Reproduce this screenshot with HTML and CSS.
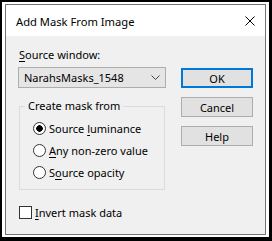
FILE: index.html
```html
<!DOCTYPE html>
<html lang="en">
<head>
  <meta charset="UTF-8" />
  <title>Add Mask From Image</title>
  <link rel="stylesheet" href="styles.css">
</head>
<body>
  <div class="frame">
    <div class="window">

      <div class="titlebar">
        <div class="title">Add Mask From Image</div>
        <svg class="close" width="10" height="10" viewBox="0 0 10 10">
          <path d="M0.5 0.5 L9.5 9.5 M9.5 0.5 L0.5 9.5" stroke="#000" stroke-width="1" fill="none" />
        </svg>
      </div>

      <div class="content">
        <div class="main">
          <div class="label"><u>S</u>ource window:</div>
          <div class="combo">
            <span>NarahsMasks_1548</span>
            <svg width="9" height="5" viewBox="0 0 9 5">
              <path d="M0.5 0.5 L4.5 4.5 L8.5 0.5" stroke="#444" stroke-width="1" fill="none" />
            </svg>
          </div>

          <fieldset class="group">
            <legend>Create mask from</legend>
            <div class="options">
              <label class="option"><input type="radio" name="src" checked><span>Source <u>l</u>uminance</span></label>
              <label class="option"><input type="radio" name="src"><span><u>A</u>ny non-zero value</span></label>
              <label class="option"><input type="radio" name="src"><span>S<u>o</u>urce opacity</span></label>
            </div>
          </fieldset>

          <label class="option check"><input type="checkbox"><span><u>I</u>nvert mask data</span></label>
        </div>

        <div class="buttons">
          <button class="default">OK</button>
          <button>Cancel</button>
          <button>Help</button>
        </div>
      </div>

    </div>
  </div>
</body>
</html>
```

FILE: styles.css
```css
html, body {
  margin: 0;
  padding: 0;
  background: #fff;
  font-family: 'Noto Sans', 'Segoe UI', sans-serif;
  font-size: 11px;
  color: #000;
}

u {
  text-underline-offset: 2px;
}

.frame {
  width: 272px;
  height: 241px;
  box-sizing: border-box;
  border-style: solid;
  border-color: #000;
  border-width: 2px 3px 4px 2px;
  padding: 2px 3px 2px 3px;
  background: #fff;
}

.window {
  height: 100%;
  box-sizing: border-box;
  border: 1px solid #737373;
  display: flex;
  flex-direction: column;
}

.titlebar {
  height: 31px;
  background: #fff;
  display: flex;
  align-items: center;
  justify-content: space-between;
  padding: 0 10px 0 10px;
  font-size: 12px;
}

.title {
  font-size: 11.2px;
  padding-top: 1px;
}

.close {
  margin-right: 0;
}

.content {
  flex: 1;
  background: #f0f0f0;
  display: flex;
  gap: 15px;
  padding: 0 0 0 12px;
}

.main {
  width: 148px;
  padding-top: 11px;
}

.label {
  line-height: 16px;
  padding-left: 1px;
}

.combo {
  margin-top: 4px;
  height: 21px;
  box-sizing: border-box;
  border: 1px solid #adadad;
  background: #e5e5e5;
  display: flex;
  align-items: center;
  justify-content: space-between;
  padding: 0 5px 0 5px;
}

.group {
  margin: 10px 1px 0 1px;
  padding: 3px 0 6px 0;
  border: 1px solid #dcdcdc;
}

.group legend {
  margin-left: 5px;
  padding: 0 3px;
  line-height: 16px;
}

.options {
  margin-left: 13px;
}

.option {
  display: flex;
  align-items: center;
  gap: 3px;
  height: 22px;
}

.option input {
  appearance: none;
  margin: 0;
  width: 13px;
  height: 13px;
  box-sizing: border-box;
  border: 1px solid #333;
  background: #fff;
}

.option input[type="radio"] {
  border-radius: 50%;
}

.option input[type="radio"]:checked {
  background: radial-gradient(circle, #000 3px, #fff 3.5px);
}

.check {
  margin: 11px 0 0 1px;
}

.buttons {
  display: flex;
  flex-direction: column;
  gap: 9px;
  padding-top: 32px;
}

.buttons button {
  width: 72px;
  height: 20px;
  box-sizing: border-box;
  border: 1px solid #adadad;
  background: #e1e1e1;
  font: inherit;
  padding: 0;
  color: #000;
}

.buttons button.default {
  border: 2px solid #0078d7;
}
```
